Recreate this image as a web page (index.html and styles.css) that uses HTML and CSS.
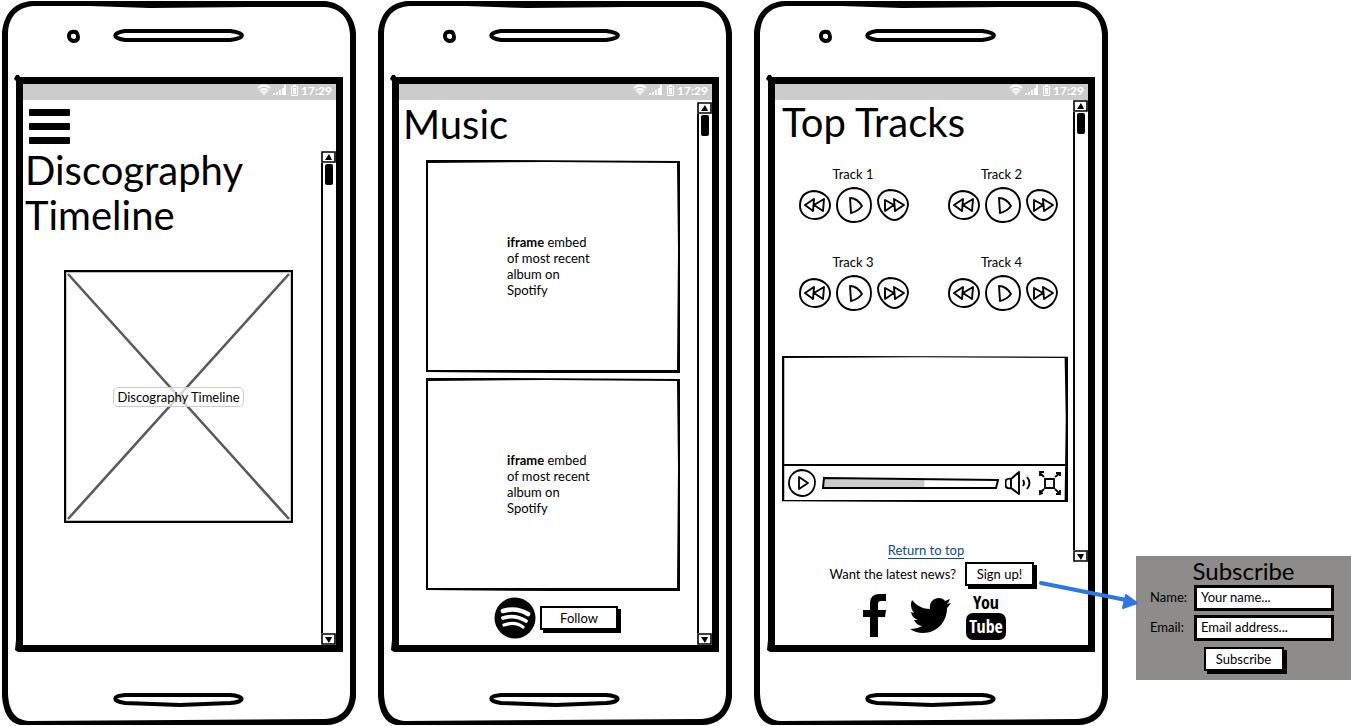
FILE: index.html
```html
<!DOCTYPE html>
<html lang="en">
<head>
<meta charset="utf-8">
<title>Music site wireframes</title>
<link rel="stylesheet" href="styles.css">
</head>
<body>
<svg class="defs" aria-hidden="true">
  <symbol id="frame" viewBox="0 0 357 726" preserveAspectRatio="none">
    <path fill="#000" fill-rule="evenodd" d="M32 1L324 1C342 2 355 16 356 33L356 697C354 714 343 724 328 725L20 725C9 723 3 712 2 696L2 32C4 14 14 2 32 1ZM34 6C18 7 9 16 8 33L8 694C9 711 15 720 29 721L325 719C341 718 349 710 350 694L350 34C349 17 339 8 325 7L250 7L150 8L90 6Z"/>
    <path fill="#000" fill-rule="evenodd" d="M16 75L19 75L20 77L343 77L343 652L18 652L15 650L16 640L16 81L14 79ZM23 84L23 645L336 645L336 84Z"/>
    <g fill="none" stroke="#000" stroke-width="4">
      <path d="M72 32C76 31 78 33 78 37C78 40 76 41 73 41C70 40 69 39 69 36C69 34 70 32 72 32Z"/>
      <path d="M125 31L230 31C246 33 246 38 230 40L125 40C112 38 112 33 125 31Z"/>
      <path d="M125 695L230 695C246 696 245 702 230 703L180 705L125 703C112 701 112 696 125 695Z"/>
    </g>
  </symbol>
  <symbol id="status" viewBox="0 0 42 14">
    <g fill="none" stroke="#fff" stroke-width="2">
      <path d="M1 4Q7-1 13 4"/><path d="M3 7Q7 3 11 7"/>
    </g>
    <path fill="#fff" d="M4 8Q7 6 10 8L7 11ZM16 9h2v2h-2zM19 8h2v3h-2zM22 6h2v5h-2zM25 4h2v7h-2zM27 1h2v10h-2z"/>
    <path fill="none" stroke="#fff" d="M34.500 2.500h6v9h-6z"/><path fill="#fff" d="M36 1h3v2h-3zM36 4h3v6h-3z"/>
  </symbol>
  <symbol id="up" viewBox="0 0 15 12"><path d="M1 1L14 1L14 11L1 11Z" fill="#fff" stroke="#000" stroke-width="1.600"/><path d="M4 9L8 3L11 9Z"/></symbol>
  <symbol id="down" viewBox="0 0 15 12"><path d="M1 1L14 1L14 11L1 11Z" fill="#fff" stroke="#000" stroke-width="1.600"/><path d="M4 4L11 4L8 10Z"/></symbol>
  <symbol id="box" viewBox="0 0 254 213" preserveAspectRatio="none">
    <path fill="#000" fill-rule="evenodd" d="M0 0L60 0L254 1L254 110L254 213L130 213L0 212L0 110ZM2 3L2 210L130 210L251 210L252 90L251 3L120 2Z"/>
  </symbol>
  <symbol id="prev" viewBox="0 0 32 32">
    <g fill="none" stroke="#000" stroke-width="1.900" stroke-linejoin="round"><path d="M14 2C23 2 31 8 31 16C31 24 24 30 16 30C7 30 1 24 1 17C1 8 6 3 14 2Z"/><path d="M15 10L14 22L6 16ZM25 10L24 22L15 16Z"/></g>
  </symbol>
  <symbol id="play" viewBox="0 0 36 36">
    <g fill="none" stroke="#000" stroke-width="1.900" stroke-linejoin="round"><path d="M17 1C28 1 35 8 35 18C35 29 28 35 18 35C8 35 1 28 1 18C1 8 8 2 17 1Z"/><path d="M14 11C19 11 23 14 26 19C23 23 20 25 15 26Z"/></g>
  </symbol>
  <symbol id="next" viewBox="0 0 32 32">
    <g fill="none" stroke="#000" stroke-width="1.900" stroke-linejoin="round"><path d="M12 1C23 1 31 7 31 16C30 24 24 31 17 31C9 30 1 21 1 11C2 5 5 2 12 1Z"/><path d="M8 11L17 16L8 22ZM17 10L27 16L18 22Z"/></g>
  </symbol>
</svg>

<main class="board">
  <section class="phone">
    <svg class="phone-frame" aria-hidden="true"><use href="#frame"/></svg>
    <header class="status"><svg width="42" height="14"><use href="#status"/></svg><span>17:29</span></header>
    <nav class="menu-row">
      <button class="menu" aria-label="Menu"><span></span><span></span><span></span></button>
    </nav>
    <div class="view">
      <div class="content">
        <h1 class="title title-two">Discography<br>Timeline</h1>
        <figure class="picture">
          <svg class="cover" viewBox="0 0 229 253" preserveAspectRatio="none" aria-hidden="true"><path d="M4 4L225 249M225 4L4 249" stroke="#5a5a5a" stroke-width="2.600"/><path d="M1 1H228V252H1Z" fill="none" stroke="#000" stroke-width="2.400"/></svg>
          <figcaption class="caption">Discography Timeline</figcaption>
        </figure>
      </div>
      <div class="scroll">
        <button aria-label="Scroll up"><svg width="15" height="12"><use href="#up"/></svg></button>
        <div class="track"><span class="thumb"></span></div>
        <button aria-label="Scroll down"><svg width="15" height="12"><use href="#down"/></svg></button>
      </div>
    </div>
  </section>

  <section class="phone">
    <svg class="phone-frame" aria-hidden="true"><use href="#frame"/></svg>
    <header class="status"><svg width="42" height="14"><use href="#status"/></svg><span>17:29</span></header>
    <div class="view view-music">
      <div class="content">
        <h1 class="title">Music</h1>
        <div class="albums">
          <article class="album"><svg class="cover" aria-hidden="true"><use href="#box"/></svg><p><b>iframe</b> embed<br>of most recent<br>album on<br>Spotify</p></article>
          <article class="album"><svg class="cover" aria-hidden="true"><use href="#box"/></svg><p><b>iframe</b> embed<br>of most recent<br>album on<br>Spotify</p></article>
        </div>
        <div class="follow">
          <svg width="42" height="42" viewBox="0 0 42 42" role="img" aria-label="Spotify"><circle cx="21" cy="21" r="20.500"/><g fill="none" stroke="#fff" stroke-linecap="round"><path d="M9 14Q22 10 34 17" stroke-width="4.600"/><path d="M9 21Q21 17 32 24" stroke-width="3.800"/><path d="M10 28Q21 24 29 30" stroke-width="3.200"/></g></svg>
          <button class="btn btn-follow">Follow</button>
        </div>
      </div>
      <div class="scroll">
        <button aria-label="Scroll up"><svg width="15" height="12"><use href="#up"/></svg></button>
        <div class="track"><span class="thumb"></span></div>
        <button aria-label="Scroll down"><svg width="15" height="12"><use href="#down"/></svg></button>
      </div>
    </div>
  </section>

  <section class="phone" id="top">
    <svg class="phone-frame" aria-hidden="true"><use href="#frame"/></svg>
    <header class="status"><svg width="42" height="14"><use href="#status"/></svg><span>17:29</span></header>
    <div class="view view-tracks">
      <div class="content">
        <h1 class="title">Top Tracks</h1>
        <div class="tracks">
          <article class="song"><h2>Track 1</h2><div class="controls"><button aria-label="Previous"><svg width="32" height="32"><use href="#prev"/></svg></button><button aria-label="Play"><svg width="36" height="36"><use href="#play"/></svg></button><button aria-label="Next"><svg width="32" height="32"><use href="#next"/></svg></button></div></article>
          <article class="song"><h2>Track 2</h2><div class="controls"><button aria-label="Previous"><svg width="32" height="32"><use href="#prev"/></svg></button><button aria-label="Play"><svg width="36" height="36"><use href="#play"/></svg></button><button aria-label="Next"><svg width="32" height="32"><use href="#next"/></svg></button></div></article>
          <article class="song"><h2>Track 3</h2><div class="controls"><button aria-label="Previous"><svg width="32" height="32"><use href="#prev"/></svg></button><button aria-label="Play"><svg width="36" height="36"><use href="#play"/></svg></button><button aria-label="Next"><svg width="32" height="32"><use href="#next"/></svg></button></div></article>
          <article class="song"><h2>Track 4</h2><div class="controls"><button aria-label="Previous"><svg width="32" height="32"><use href="#prev"/></svg></button><button aria-label="Play"><svg width="36" height="36"><use href="#play"/></svg></button><button aria-label="Next"><svg width="32" height="32"><use href="#next"/></svg></button></div></article>
        </div>
        <div class="video">
          <svg class="cover" aria-hidden="true"><use href="#box"/></svg>
          <div class="video-bar">
            <button aria-label="Play video"><svg width="28" height="28" viewBox="0 0 28 28" fill="none" stroke="#000" stroke-width="1.800" stroke-linejoin="round"><path d="M13 1C21 1 27 6 27 13C27 22 21 27 14 27C6 26 1 21 1 14C1 7 6 2 13 1Z"/><path d="M11 8L20 14L11 20Z"/></svg></button>
            <div class="seek">
              <svg class="cover" viewBox="0 0 178 12" preserveAspectRatio="none" aria-hidden="true"><path d="M2 1L103 2V11H1Z" fill="#ccc"/><path d="M2 1L177 3L175 11L1 11Z" fill="none" stroke="#000" stroke-width="2"/></svg>
            </div>
            <button aria-label="Volume"><svg width="27" height="26" viewBox="0 0 27 26" fill="none" stroke="#000" stroke-width="1.900" stroke-linejoin="round"><path d="M1 10Q3 8 6 9L6 18Q3 19 1 17Q0 13 1 10ZM6 9L14 2L14 24L6 18"/><path d="M18 10Q20 13 18 16M22 7Q27 13 22 19"/></svg></button>
            <button aria-label="Full screen"><svg width="24" height="26" viewBox="0 0 24 26" fill="none" stroke="#000" stroke-width="1.800"><path d="M7 9H16L16 18H7Z"/><path d="M6 7L2 3M2 6V2H6M17 7L22 3M18 3H22V6M6 19L2 23M2 20V24L5 23M17 19L22 24M22 20V24H18"/></svg></button>
          </div>
        </div>
        <a class="top-link" href="#top">Return to top</a>
      </div>
      <div class="scroll">
        <button aria-label="Scroll up"><svg width="15" height="12"><use href="#up"/></svg></button>
        <div class="track"><span class="thumb"></span></div>
        <button aria-label="Scroll down"><svg width="15" height="12"><use href="#down"/></svg></button>
      </div>
    </div>
    <footer class="footer">
      <div class="news"><span>Want the latest news?</span><button class="btn btn-sign">Sign up!</button></div>
      <div class="social">
        <a href="#facebook" aria-label="Facebook"><svg width="24" height="45" viewBox="0 0 24 45"><path d="M23 1V8H18Q15 8 15 11V17H23L22 24H15V44H7V24H0V17H7V10Q7 1 17 1Z"/></svg></a>
        <a href="#twitter" aria-label="Twitter"><svg width="41" height="35" viewBox="0 0 41 35"><path d="M2 2C7 8 13 11 20 11C19 5 23 0 29 0Q33 0 35 3L40 1Q39 4 37 6L41 5Q39 8 37 10C37 24 27 35 13 35Q6 35 0 31Q7 31 12 28Q6 27 4 22H8Q2 20 1 14L4 15Q-1 9 2 2Z"/></svg></a>
        <a href="#youtube" aria-label="YouTube" class="youtube"><span class="yt">You</span><span class="yt yt-tube">Tube</span></a>
      </div>
    </footer>
  </section>

  <aside class="side">
    <form class="subscribe">
      <h2>Subscribe</h2>
      <div class="fields">
        <label for="name">Name:</label><input id="name" type="text" value="Your name...">
        <label for="email">Email:</label><input id="email" type="text" value="Email address...">
      </div>
      <button class="btn btn-subscribe" type="button">Subscribe</button>
      <svg class="arrow" width="100" height="32" viewBox="0 0 100 32" aria-hidden="true"><path d="M3 5L88 22" stroke="#2b78e4" stroke-width="4" stroke-linecap="round"/><path d="M88 17L99 25L85 30Z" fill="#2b78e4" stroke="#2b78e4" stroke-width="2" stroke-linejoin="round"/></svg>
    </form>
  </aside>
</main>
</body>
</html>
```
FILE: styles.css
```css
* { box-sizing: border-box; }
body, h1, h2, p, figure { margin: 0; }
body {
  background: #fff;
  color: #000;
  font: 13px/16px Lato, "Noto Sans", sans-serif;
}
button, input { font: inherit; color: inherit; }
button { border: 0; padding: 0; background: none; cursor: pointer; }
svg { display: block; }
.defs { position: absolute; width: 0; height: 0; }

.board {
  display: grid;
  grid-template-columns: minmax(0, 357fr) minmax(0, 357fr) minmax(0, 357fr) minmax(0, 223fr);
  column-gap: 19px;
  min-height: 100vh;
}

.phone {
  position: relative;
  display: flex;
  flex-direction: column;
  padding: 84px 21px 81px 23px;
}
.phone-frame, .cover {
  position: absolute;
  inset: 0;
  width: 100%;
  height: 100%;
}
.status {
  position: relative;
  display: flex;
  justify-content: flex-end;
  align-items: flex-start;
  gap: 2px;
  height: 16px;
  padding-right: 4px;
  background: #ccc;
  color: #fff;
  font-size: 12px;
  font-weight: bold;
  line-height: 13px;
}
.view {
  position: relative;
  flex: 1;
  display: grid;
  grid-template-columns: minmax(0, 1fr) 15px;
}
.content { display: flex; flex-direction: column; }
.title {
  padding-left: 4px;
  font-size: 40px;
  font-weight: normal;
  line-height: 45px;
}
.title-two { margin-top: -3px; padding-left: 2px; }

.menu-row { position: relative; padding: 9px 6px 7px; }
.menu { display: grid; gap: 7px; width: 41px; }
.menu span { height: 7px; border-radius: 1px; background: #000; }

.picture {
  position: relative;
  display: grid;
  place-items: center;
  height: 253px;
  margin: 32px 28px 0 41px;
}
.caption {
  position: relative;
  padding: 1px 3px;
  border: 1px solid #ccc;
  border-radius: 5px;
  background: rgba(255, 255, 255, .75);
}

.scroll { display: flex; flex-direction: column; }
.track {
  flex: 1;
  border-left: 2px solid #000;
  padding: 1px 2px;
}
.thumb {
  display: block;
  width: 8px;
  height: 21px;
  border-radius: 2px;
  background: #000;
}

.view-music { padding-top: 2px; }
.albums { display: grid; gap: 5px; margin: 13px 17px 0 27px; }
.album {
  position: relative;
  height: 213px;
  padding: 74px 0 0 81px;
}
.album p { position: relative; }
.follow {
  display: flex;
  align-items: center;
  gap: 4px;
  margin: 6px 0 0 95px;
}

.btn {
  height: 24px;
  border: 2px solid #000;
  background: #fff;
  box-shadow: 3px 3px 0 #000;
  line-height: 18px;
}
.btn-follow { width: 78px; }
.btn-sign { width: 69px; }
.btn-subscribe { width: 80px; }

.view-tracks .title { padding-left: 7px; }
.tracks {
  display: grid;
  grid-template-columns: 1fr 1fr;
  gap: 31px 38px;
  margin: 21px 15px 0 24px;
}
.song { display: grid; gap: 5px; }
.song h2 {
  font-size: 13px;
  font-weight: normal;
  line-height: 16px;
  width: 108px;
  text-align: center;
}
.controls { display: flex; align-items: center; gap: 5px; }
.video {
  position: relative;
  display: flex;
  flex-direction: column;
  justify-content: flex-end;
  height: 146px;
  margin: 45px 5px 0 7px;
}
.video-bar {
  position: relative;
  display: flex;
  align-items: center;
  gap: 6px;
  height: 38px;
  padding: 0 6px 2px;
  border-top: 2px solid #000;
}
.seek { position: relative; flex: 1; height: 12px; }
.top-link {
  align-self: center;
  margin: 41px 0 0 4px;
  border-bottom: 1px solid #0b4a8f;
  color: #0b4a8f;
  line-height: 15px;
  text-decoration: none;
}

.footer { position: relative; height: 83px; }
.news {
  display: flex;
  align-items: center;
  justify-content: flex-end;
  gap: 9px;
  padding: 0 54px 0 0;
}
.social {
  display: flex;
  align-items: center;
  gap: 18px;
  padding: 5px 0 0 88px;
}
.social a { color: #000; }
.social a:first-child { margin-right: 5px; }
.social .youtube {
  display: grid;
  width: 40px;
  margin-left: -3px;
  text-align: center;
  text-decoration: none;
}
.yt { font: bold 18px/22px "Liberation Sans Narrow", "Open Sans Condensed", Roboto, sans-serif; }
.yt-tube {
  border-radius: 7px;
  background: #000;
  color: #fff;
  line-height: 27px;
}

.side { display: flex; flex-direction: column; padding: 556px 0 46px 8px; }
.subscribe {
  position: relative;
  display: flex;
  flex-direction: column;
  align-items: center;
  height: 124px;
  padding: 2px 0 0;
  background: #8e8c8a;
}
.subscribe h2 { font-size: 24px; font-weight: normal; line-height: 26px; }
.fields {
  display: grid;
  grid-template-columns: 44px minmax(0, 1fr);
  align-items: center;
  gap: 4px 0;
  align-self: stretch;
  padding: 1px 17px 0 14px;
}
.fields label { padding-bottom: 3px; }
.fields input {
  width: 100%;
  height: 26px;
  padding: 0 4px 2px;
  border: 3px solid #000;
  border-radius: 0;
  background: #fff;
}
.btn-subscribe { margin-top: 6px; }
.arrow { position: absolute; left: -98px; top: 22px; }
```
